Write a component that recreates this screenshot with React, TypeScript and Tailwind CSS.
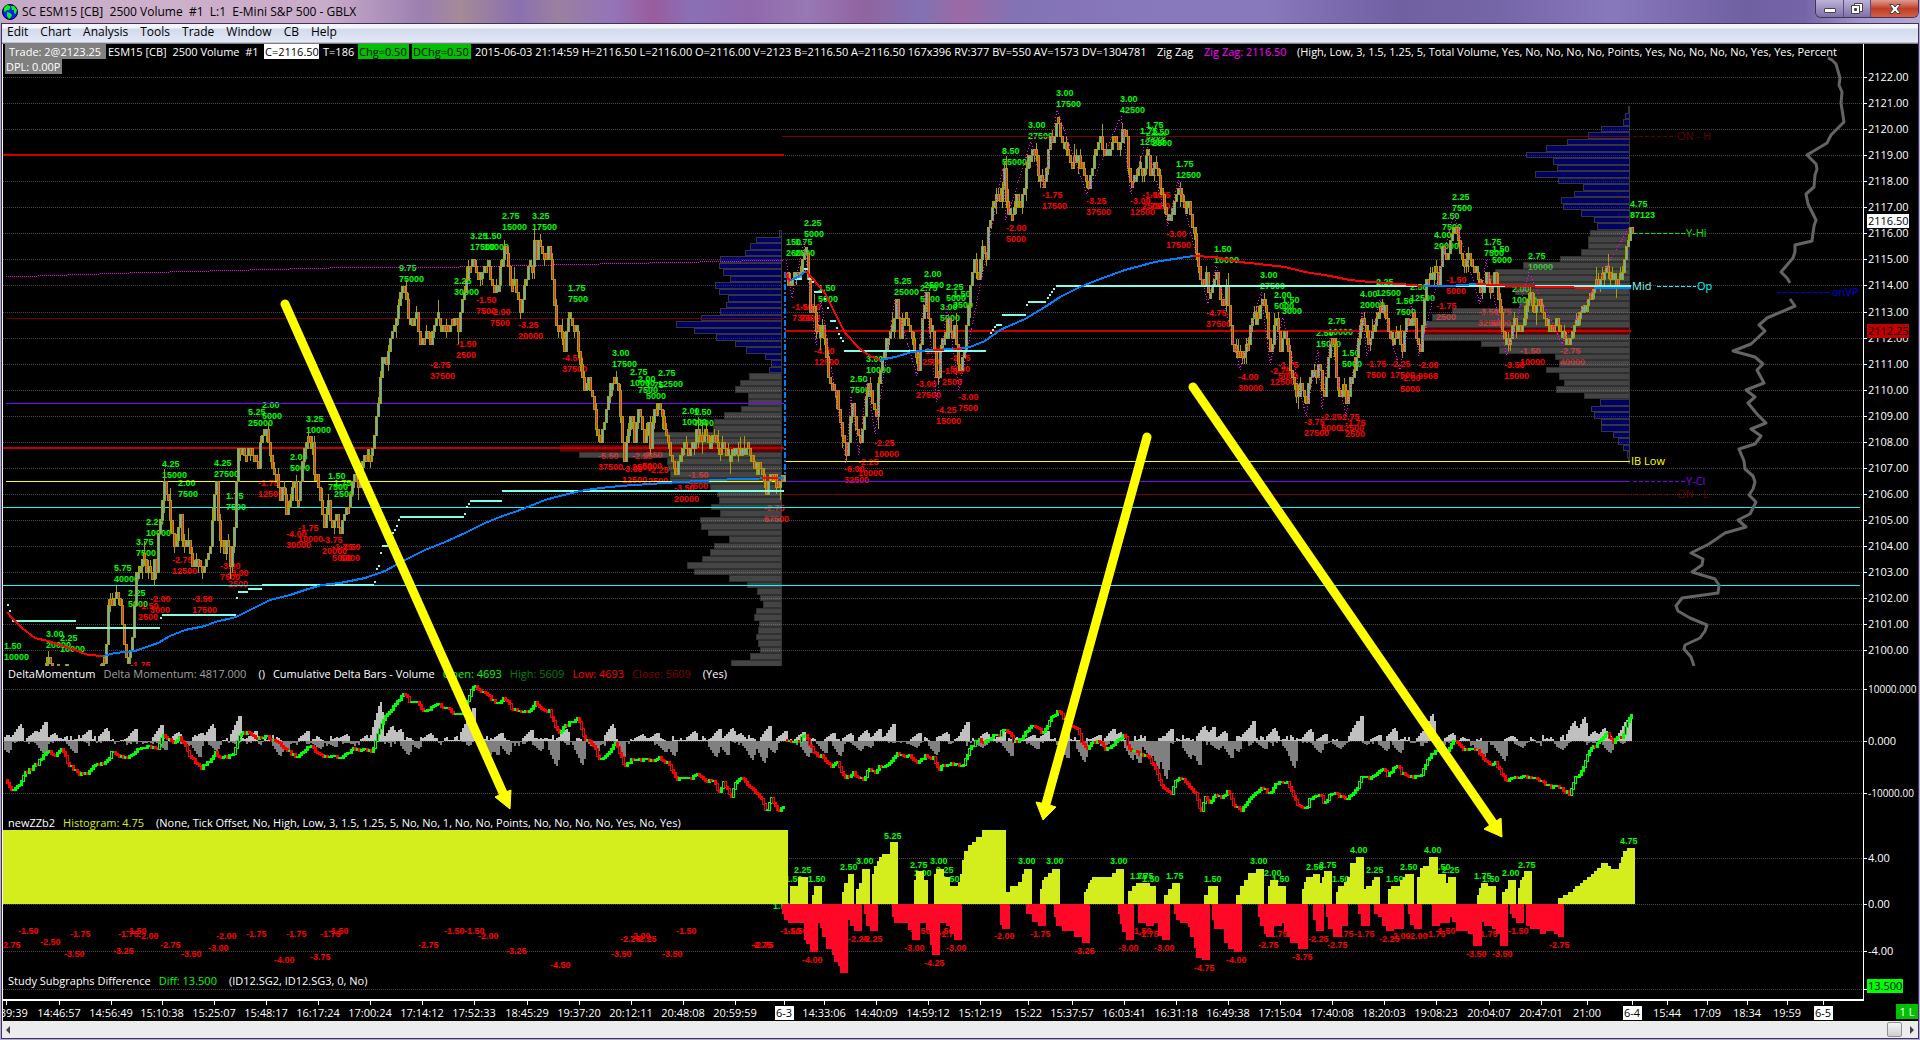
import React from "react";

type Pt = [number, number];

const parse = (s: string): Pt[] =>
  s
    .trim()
    .split(/\s+/)
    .map((p) => p.split(",").map(Number) as Pt);

const noise = (n: number) => {
  const v = Math.sin(n * 127.1 + 311.7) * 43758.5453;
  return v - Math.floor(v);
};

const TICK = 6.515;
const priceY = (p: number) => 77 + (2122 - p) * 4 * TICK;

/* ---------- price bars ---------- */

const SESSION_1 = parse(`
3,690 40,690 44,668 47,655 50,672 56,672 60,666 64,670 75,690 96,690 99,668 104,660 107,605 111,605 115,593 119,605 124,655 126,664
131,640 135,575 138,567 142,553 145,572 148,560 150,585 153,562 155,572 157,533 160,513 163,482 167,502 169,520 173,546 176,535 179,515 182,547 186,533
189,552 192,575 195,556 200,572 205,558 209,547 212,502 215,482 218,540 223,553 226,535 229,567 233,527 236,455 238,443 243,455 248,448
257,468 259,443 262,430 266,432 268,448 272,475 276,478 279,502 282,484 285,513 288,502 293,482 296,513 299,482 302,448 307,443 311,445
312,475 316,478 319,502 323,527 327,502 330,527 335,515 339,533 343,513 348,502 352,475 357,488 362,457 367,458 372,448 373,433 377,400
378,383 381,358 386,362 388,338 392,330 395,318 399,293 403,290 405,300 407,318 412,325 415,313 418,343 425,332 429,343 432,327 437,317 442,330 446,335
450,325 455,317 457,330 460,307 463,290 467,267 471,260 474,266 477,280 482,267 487,268 492,293 497,285 499,267 502,252 504,247 507,265
508,285 513,282 517,297 519,312 522,290 527,267 531,265 533,240 535,258 537,240 542,257 544,265 547,247 550,267 552,297 556,330 560,332
563,350 567,317 572,327 575,330 578,360 583,387 587,378 592,400 594,423 599,440 603,423 606,400 609,380 613,382 616,380 618,400 621,440
623,460 627,427 630,410 633,443 636,410 639,413 643,443 647,423 649,446 652,413 657,403 660,410 663,427 668,443 670,462 675,473 678,460
683,443 687,455 692,446 695,430 698,438 703,436 708,442 713,436 717,448 723,449 728,460 733,448 738,455 743,448 747,450 750,462 753,467
758,467 762,480 765,492 768,480 772,470 776,492 780,477 783,481`);

const SESSION_2 = parse(`
785,273 788,292 793,270 798,278 803,250 805,254 807,277 809,311 813,313 815,330 821,327 824,347 827,377 832,395 834,383 838,420 842,437
846,460 848,420 851,403 854,427 859,442 863,413 867,380 872,408 876,422 877,380 881,357 885,340 892,330 895,300 899,337 903,317 908,327
913,350 917,370 921,320 925,295 928,328 932,330 934,377 937,376 940,338 945,340 947,320 951,336 953,327 956,357 959,370 963,350 965,327
968,290 973,262 977,278 981,244 985,260 987,228 991,208 995,195 1000,200 1003,170 1006,213 1010,217 1015,196 1019,206 1023,185 1027,157
1031,150 1035,153 1037,175 1043,180 1046,163 1048,136 1052,142 1056,118 1059,137 1063,145 1067,157 1072,162 1076,150 1079,165 1087,186
1091,165 1095,150 1099,138 1104,162 1108,147 1113,142 1118,148 1121,131 1125,136 1127,165 1130,187 1133,175 1139,168 1142,175 1146,150
1149,175 1153,162 1157,177 1161,195 1164,213 1168,218 1172,213 1174,195 1178,195 1180,200 1183,207 1187,203 1190,220 1193,233 1196,260
1198,272 1202,290 1205,273 1208,300 1212,277 1216,275 1218,298 1222,310 1225,288 1228,318 1232,355 1236,345 1240,363 1244,345 1247,346
1249,327 1252,318 1257,318 1261,298 1265,313 1267,338 1270,357 1273,327 1276,318 1279,350 1282,327 1286,340 1289,368 1293,383 1296,403
1298,383 1302,390 1306,406 1307,383 1312,366 1315,377 1318,360 1322,403 1326,367 1330,340 1333,347 1336,390 1340,398 1342,383 1346,407
1348,380 1353,370 1356,347 1358,330 1362,318 1367,343 1372,325 1377,310 1383,307 1387,330 1392,343 1397,332 1400,355 1405,318 1410,328
1412,310 1416,345 1419,350 1422,307 1425,280 1430,280 1434,267 1437,283 1441,247 1446,263 1448,240 1452,227 1456,229 1458,247 1463,265
1467,253 1472,272 1476,270 1480,300 1485,272 1489,293 1493,275 1498,305 1502,337 1507,343 1513,320 1520,330 1523,318 1528,290 1533,310
1538,301 1543,321 1550,325 1555,319 1558,330 1567,343 1572,327 1580,313 1588,297 1595,285 1600,281 1605,264 1609,276 1620,276 1624,254
1626,240 1629,230 1632,222`);

const sample = (pts: Pt[], step: number): Pt[] => {
  const out: Pt[] = [];
  let i = 0;
  for (let x = pts[0][0]; x <= pts[pts.length - 1][0]; x += step) {
    while (i < pts.length - 2 && pts[i + 1][0] < x) i++;
    const [x0, y0] = pts[i];
    const [x1, y1] = pts[i + 1];
    out.push([x, y0 + ((y1 - y0) * (x - x0)) / (x1 - x0)]);
  }
  return out;
};

const Bars = ({ points, seed }: { points: Pt[]; seed: number }) => {
  const base = priceY(2122);
  const snap = (y: number) => Math.round(base + Math.round((y - base) / TICK) * TICK);
  const closes = sample(points, 2);
  let olive = "";
  let up = "";
  let down = "";
  closes.forEach(([x, y], i) => {
    if (i === 0) return;
    const open = snap(closes[i - 1][1]);
    const close = snap(y);
    let top = Math.min(open, close);
    let bottom = Math.max(open, close);
    const rising = close < open || (close === open && noise(i + seed) > 0.5);
    if (bottom - top < 6) {
      if (noise(i * 3 + seed) > 0.5) bottom += 6;
      else top -= 6;
    }
    const high = top - Math.floor(noise(i * 5 + seed) * noise(i * 9 + seed) * 3) * 6;
    const low = bottom + Math.floor(noise(i * 7 + seed) * noise(i * 11 + seed) * 3) * 6;
    const h = bottom - top + 1;
    olive += `M${x} ${top}h3v${h}h-3z`;
    olive += `M${x + 1} ${high}h1v${low - high + 1}h-1z`;
    const body = `M${x + 1} ${top + 1}h1v${Math.max(1, h - 2)}h-1z`;
    if (rising) up += body;
    else down += body;
  });
  return (
    <g shapeRendering="crispEdges">
      <path d={olive} fill="#a8a000" />
      <path d={up} fill="#4fb4ff" />
      <path d={down} fill="#e8304a" />
    </g>
  );
};

/* ---------- swing labels: x, y, points, volume ---------- */

const SWINGS = `
4,646,1.50,10000 46,634,3.00,20000 60,638,2.25,10000 130,665,-1.75, 114,568,5.75,40000 128,593,2.25,5000 138,606,-1.50,2500 150,599,-2.00,3000
136,542,3.75,7500 146,522,2.25,10000 162,464,4.25,15000 178,483,2.00,7500 172,560,-2.75,12500 192,599,-3.50,17500 214,463,4.25,27500
226,496,1.75,7500 220,566,-3.00,7500 228,573,-3.00,2500 248,412,5.25,25000 262,405,2.00,5000 258,483,-1.75,12500 290,457,2.00,5000
306,419,3.25,10000 286,534,-4.00,30000 298,528,-1.75,10000 328,476,1.50,7500 334,483,1.75,2500 322,540,-3.75,20000 332,547,-1.75,5000
340,547,-1.50,5000 399,268,9.75,75000 454,281,2.25,30000 470,236,3.25,17500 484,236,1.50,10000 502,216,2.75,15000 532,216,3.25,17500
476,300,-1.50,7500 490,312,-2.00,7500 518,325,-3.25,20000 456,344,-1.50,2500 430,365,-2.75,37500 568,288,1.75,7500 562,358,-4.50,37500
612,353,3.00,17500 630,372,2.75,10000 638,379,2.00,7500 646,385,1.75,5000 658,373,2.75,12500 598,456,-5.50,37500 632,456,-2.25,2500
642,455,-2.50,5000 622,469,-3.00,12500 648,470,-2.25,2500 674,488,-3.50,20000 688,475,-1.50,7500 682,411,2.00,10000 694,412,1.50,7500
764,508,-2.75,87500 786,242,150,2600 795,242,1.75,2500 804,223,2.25,5000 792,307,-1.50,7300 800,307,-1.50,7500 818,288,1.50,5000
814,351,-4.00,12500 866,359,3.00,10000 850,379,2.50,7500 844,469,-6.00,32500 858,462,-2.25,10000 874,443,-2.25,10000 894,281,5.25,25000
920,288,2.75,5000 924,274,2.00,2500 922,351,-1.50,2500 916,384,-3.00,27500 936,410,-4.25,15000 940,307,3.00,5000 946,287,2.25,5000
953,294,1.50,3500 942,371,-1.50,2500 950,358,-1.75,5000 958,397,-3.00,7500 1006,228,-2.00,5000 1002,151,8.50,55000 1028,125,3.00,27500
1056,93,3.00,17500 1042,195,-1.75,17500 1086,201,-3.25,37500 1120,99,3.00,42500 1140,131,1.75,12500 1146,125,1.75,5000 1152,132,1.50,2500
1130,201,-3.00,12500 1142,195,-1.50,2500 1150,195,-1.75,7500 1176,164,1.75,12500 1166,234,-3.00,17500 1214,249,1.50,10000
1206,313,-4.75,37500 1238,377,-4.00,30000 1260,275,3.00,27500 1274,295,2.00,5000 1282,300,1.50,3000 1270,371,-2.75,12500 1278,365,-1.75,5000
1328,321,2.75,10000 1316,333,2.50,15000 1342,353,1.50,5000 1304,422,-3.75,27500 1321,417,-2.25,5000 1339,417,-2.75,12500 1345,423,-1.75,2500
1360,294,4.00,20000 1376,282,2.25,12500 1396,301,1.50,7500 1410,287,2.50,12500 1366,364,-1.75,7500 1390,364,-2.25,17500 1400,378,-2.00,5000
1418,365,-2.00,9968 1436,306,-1.75,2500 1434,235,4.00,20000 1442,216,2.50,7500 1452,197,2.25,7500 1446,280,-1.50,5000 1484,242,1.75,7500
1492,249,1.50,5000 1478,312,-3.50,32500 1491,312,-1.75,5000 1528,256,2.75,10000 1512,289,2.00,10000 1504,365,-3.50,15000
1520,351,-1.50,10000 1560,351,-2.75,40000 1630,181,4.75,87123`
  .trim()
  .split(/\s+/)
  .map((s) => s.split(","))
  .map(([x, y, v, vol]) => (vol === "87123" ? [x, "204", v, vol] : [x, y, v, vol]));

const Swings = () => (
  <g className="font-['Liberation_Sans',sans-serif] text-[9px] font-bold">
    {SWINGS.map(([x, y, v, vol], i) => (
      <text key={i} x={x} y={Number(y) + 3} fill={v.startsWith("-") ? "#f00" : "#0f0"}>
        {v}
        {vol && (
          <tspan x={x} dy="11">
            {vol}
          </tspan>
        )}
      </text>
    ))}
  </g>
);

/* ---------- volume profiles ---------- */

const PROFILE_1 = [
  779, 756, 750, 745, 720, 719, 723, 730, 715, 719, 728, 726, 720, 701, 676, 694, 716, 735, 746, 765, 771, 769, 749, 740, 735, 748, 748, 741,
  724, 714, 713, 652, 652, 560, 579, 667, 668, 670, 670, 710, 717, 719, 711, 720, 700, 701, 708, 729, 714, 710, 702, 687, 694, 729, 747, 757,
  760, 763, 756, 754, 759, 758, 756, 758, 760, 750, 731,
];
const PROFILE_2 = [
  1628, 1625, 1623, 1601, 1588, 1567, 1546, 1526, 1553, 1557, 1535, 1558, 1583, 1574, 1561, 1563, 1581, 1594, 1597, 1590, 1588, 1588, 1581,
  1560, 1523, 1495, 1485, 1487, 1515, 1533, 1519, 1452, 1432, 1423, 1423, 1422, 1481, 1499, 1555, 1559, 1546, 1559, 1564, 1556, 1584, 1600,
  1591, 1594, 1601, 1601, 1613, 1618, 1623, 1627, 1628,
];

const Profile = ({
  rows,
  right,
  top,
  gray,
  poc,
}: {
  rows: number[];
  right: number;
  top: number;
  gray: [number, number];
  poc: number;
}) => (
  <g shapeRendering="crispEdges" opacity="0.5">
    {rows.map((left, i) => {
      const y = Math.round(top + i * TICK);
      const h = Math.round(top + (i + 1) * TICK) - y;
      const inGray = i >= gray[0] && i < gray[1];
      const edge = i === poc ? "#b00000" : inGray ? "#606060" : "#6a6a74";
      const fill = i === poc ? "#c00000" : inGray ? "#888888" : "#0000c8";
      return (
        <g key={i}>
          <rect x={left} y={y} width={right - left} height={h} fill={edge} />
          <rect x={left + 1} y={y + 1} width={Math.max(0, right - left - 2)} height={h - 2} fill={fill} />
        </g>
      );
    })}
    <rect x={right - 1} y={top} width="1" height={rows.length * TICK} fill="#6a6a74" />
  </g>
);

/* ---------- overlays on the price pane ---------- */

const ZIGZAG =
  "786,260 792,298 804,241 816,345 821,300 846,463 851,396 859,455 867,378 875,434 895,299 917,376 925,292 937,402 947,305 959,390 985,262 1003,168 1006,220 1031,142 1043,188 1057,110 1087,194 1121,116 1131,194 1146,140 1168,226 1178,180 1208,304 1216,266 1240,370 1261,292 1270,363 1283,318 1306,416 1318,350 1322,409 1330,338 1346,416 1362,312 1367,356 1380,300 1400,370 1412,306 1419,356 1454,214 1480,304 1486,260 1507,357 1529,272 1562,344 1631,224";

const AVERAGE: [string, string][] = [
  ["#f00", "7,612 12,618 22,628 35,638 48,641 60,645 75,650 88,655 103,656"],
  [
    "#0080ff",
    "103,656 115,653 135,651 158,643 170,636 185,630 205,626 215,622 236,617 250,610 270,600 290,595 305,590 322,585 340,583 365,578 385,571 405,560 425,550 445,542 465,533 485,523 500,517 520,510 545,500 560,496 580,491 600,488 620,486 650,484 680,482 700,481 736,479 784,478",
  ],
  ["#f00", "762,478 778,478"],
  ["#f00", "786,273 788,279 791,280"],
  ["#0080ff", "791,280 798,277 806,271"],
  ["#f00", "806,271 825,293 845,333 860,349 870,356 880,360"],
  [
    "#0080ff",
    "880,360 895,357 912,352 930,350 955,349 970,347 985,341 1000,330 1025,319 1045,307 1060,297 1080,287 1100,279 1125,270 1155,262 1180,258 1193,256",
  ],
  ["#f00", "933,350 944,350"],
  ["#f00", "953,349 962,349"],
  ["#f00", "1193,256 1215,257 1240,262 1285,267 1305,272 1330,276 1350,280 1370,282 1400,284 1423,286"],
  ["#0080ff", "1423,286 1450,286 1476,284"],
  ["#f00", "1476,284 1515,286 1594,288"],
  ["#0080ff", "1594,288 1631,288"],
];

const STEPS = `12,76,621 76,160,628 162,236,615 238,248,592 248,262,589 262,374,585 382,388,546 400,464,517 470,502,501 502,784,491
7,9,605 9,11,611 11,13,618 160,162,618 236,238,598 374,376,582 376,378,569 378,380,566 380,382,553 392,394,533 394,396,530 396,398,526
398,400,520 464,466,514 466,468,507 468,470,504 795,802,279 804,808,269 808,811,279 812,814,282 814,822,292 824,826,299 827,829,308
830,836,321 836,838,328 838,840,334 840,842,338 842,844,341 844,986,351 988,990,338 990,992,333 992,994,330 994,996,327 996,1002,325
1002,1026,315 1026,1028,305 1028,1046,302 1047,1049,298 1049,1051,295 1051,1053,292 1053,1055,289 1056,1631,286`
  .trim()
  .split(/\s+/)
  .map((s) => s.split(",").map(Number));

const DENSITY = [
  "1828,58 1832,60 1836,64 1840,78 1839,85 1842,92 1841,103 1844,122 1831,135 1827,143 1807,155 1816,164 1817,169 1815,175 1814,187 1806,194 1808,204 1816,220 1814,226 1812,241 1795,245 1795,252 1793,258 1781,272 1787,278 1790,283",
  "1790,299 1795,306 1767,318 1759,325 1765,331 1751,344 1733,351 1755,357 1763,364 1757,370 1764,383 1746,390 1755,397 1748,403 1757,414 1766,423 1751,429 1761,436 1755,444 1739,449 1744,461 1745,469 1753,476 1755,482 1753,489 1749,495 1756,502 1750,514 1738,520 1746,527 1725,533 1709,544 1691,553 1703,559 1702,565 1692,572 1715,579 1719,585 1718,593 1682,598 1676,606 1678,611 1690,618 1707,625 1705,631 1700,638 1685,645 1684,649 1691,657 1694,666",
];

const Level = ({
  x1 = 3,
  x2,
  y,
  color,
  width = 1,
  dash,
}: {
  x1?: number;
  x2: number | string;
  y: number;
  color: string;
  width?: number;
  dash?: string;
}) => <line x1={x1} x2={x2} y1={y} y2={y} stroke={color} strokeWidth={width} strokeDasharray={dash} shapeRendering="crispEdges" />;

const LevelTag = ({ x, y, color, dashFrom, children }: { x: number; y: number; color: string; dashFrom?: number; children: string }) => (
  <>
    {dashFrom && <Level x1={dashFrom} x2={x - 1} y={y + 0.5} color={color} dash="4 2" />}
    <text x={x} y={y + 4} fill={color} className="text-[11px]">
      {children}
    </text>
  </>
);

const PricePane = () => (
  <>
    <clipPath id="price-clip">
      <rect x="0" y="44" width="100%" height="622" />
    </clipPath>
    <g clipPath="url(#price-clip)">
      <Swings />
      <Profile rows={PROFILE_1} right={782} top={230} gray={[22, 99]} poc={33} />
      <Profile rows={PROFILE_2} right={1630} top={106} gray={[19, 45]} poc={34} />
      <line x1="3" x2="100%" y1="507.5" y2="507.5" stroke="#0ff" shapeRendering="crispEdges" />
      <line x1="3" x2="100%" y1="585.5" y2="585.5" stroke="#0ff" shapeRendering="crispEdges" />
      <polyline points="6,277 130,273 330,268 460,267 600,264 700,262 784,260" fill="none" stroke="#f0f" strokeDasharray="1 1" shapeRendering="crispEdges" />
      <Level x1={6} x2={784} y={318.5} color="#780000" />
      <Level x1={6} x2={784} y={403.5} color="#8000ff" />
      <Level x2={784} y={155} color="#d00000" width={2} />
      <Level x2={784} y={448} color="#c00000" width={2} />
      <Level x1={6} x2={784} y={481.5} color="#ff0" />
      <Level x1={782} x2={1630} y={136.5} color="#780000" />
      <Level x1={785} x2={1631} y={331} color="#c80000" width={2} />
      <Level x1={785} x2={1630} y={461.5} color="#ff0" />
      <Level x1={784} x2={1630} y={481.5} color="#8000ff" />
      <Level x1={784} x2={1630} y={494.5} color="#780000" />
      <Bars points={SESSION_1} seed={3} />
      <Bars points={SESSION_2} seed={8} />
      <polyline points={ZIGZAG} fill="none" stroke="#f0f" strokeDasharray="1 2" shapeRendering="crispEdges" />
      <line x1="785" x2="785" y1="272" y2="476" stroke="#0080ff" strokeWidth="2" strokeDasharray="6 2 2 2" shapeRendering="crispEdges" />
      <g shapeRendering="crispEdges" fill="#7fffe8">
        {STEPS.map(([a, b, y]) => (
          <rect key={`${a}-${b}`} x={a} y={y - 1} width={b - a} height="2" />
        ))}
      </g>
      {AVERAGE.map(([color, points], i) => (
        <polyline key={i} points={points} fill="none" stroke={color} strokeWidth="2" shapeRendering="crispEdges" />
      ))}
      {DENSITY.map((points) => (
        <polyline key={points} points={points} fill="none" stroke="#646464" strokeWidth="3" strokeLinejoin="round" />
      ))}
      <LevelTag x={1677} y={136} color="#640000" dashFrom={1633}>ON - H</LevelTag>
      <LevelTag x={1686} y={233} color="#00f000" dashFrom={1633}>Y-Hi</LevelTag>
      <LevelTag x={1632} y={286} color="#7fffe8">Mid</LevelTag>
      <LevelTag x={1697} y={286} color="#00ffff" dashFrom={1657}>Op</LevelTag>
      <LevelTag x={1832} y={292} color="#0000e0" dashFrom={1777}>onVP</LevelTag>
      <LevelTag x={1631} y={461} color="#ffff00">IB Low</LevelTag>
      <LevelTag x={1686} y={481} color="#8000ff" dashFrom={1633}>Y-Cl</LevelTag>
      <LevelTag x={1677} y={494} color="#640000" dashFrom={1633}>ON - L</LevelTag>
    </g>
  </>
);

/* ---------- cumulative delta pane ---------- */

const DELTA_1 = parse(`
4,778 10,789 18,783 23,773 36,763 46,750 54,755 61,748 66,762 77,773 86,773 92,765 105,762 110,752 125,757 135,750 140,746 156,747
162,733 171,742 179,737 189,755 199,767 209,760 214,752 220,758 232,753 239,732 247,732 255,737 265,735 278,743 286,750 295,757 309,745
319,755 339,757 352,748 371,750 378,727 385,713 395,702 403,691 409,702 416,700 423,712 436,703 446,708 457,715 462,710 467,697 473,684
477,689 484,692 496,703 503,696 510,708 521,712 528,710 534,702 541,708 548,710 557,732 567,723 577,717 583,738 591,743 598,758 607,753
614,742 623,765 633,757 648,760 659,757 667,763 676,778 689,778 695,772 703,780 713,780 717,792 722,782 730,795 733,782 741,775 749,787
760,797 765,812 770,798 776,810 783,806`);
const DELTA_2 = parse(`
784,738 797,741 803,733 810,747 815,755 820,755 830,767 835,760 842,775 848,777 851,771 856,777 863,778 867,768 875,773 879,763 883,768
895,753 908,755 917,762 924,755 932,757 938,768 946,763 962,764 968,748 977,738 982,742 992,735 997,735 1003,728 1010,735 1013,742
1020,738 1027,727 1033,724 1040,731 1045,728 1049,718 1057,710 1063,718 1068,725 1076,728 1080,740 1085,748 1092,742 1099,740 1104,750
1110,745 1115,740 1123,734 1128,748 1137,753 1146,755 1153,765 1160,783 1167,792 1171,792 1173,780 1180,777 1187,783 1194,793 1199,812
1204,797 1209,803 1213,792 1220,798 1226,790 1232,803 1240,810 1248,798 1253,792 1262,787 1268,793 1275,782 1286,782 1296,805 1306,807
1308,798 1318,793 1323,802 1330,792 1346,798 1355,788 1361,775 1367,778 1382,768 1386,775 1396,764 1401,773 1419,777 1425,760 1435,748
1445,750 1453,740 1460,747 1477,750 1481,757 1488,763 1494,762 1500,772 1505,779 1513,775 1534,777 1547,785 1559,787 1568,793 1574,777
1581,770 1587,750 1597,742 1606,732 1612,742 1615,735 1620,738 1625,722 1631,713`);

const DeltaLine = ({ points, seed }: { points: Pt[]; seed: number }) => {
  const closes = sample(points, 2).map(([x, y], i) => [x, Math.round(y + (noise(i + seed) - 0.5) * 3)] as Pt);
  return (
    <g shapeRendering="crispEdges">
      {closes.slice(1).map(([x, y], i) => {
        const prev = closes[i][1];
        const top = Math.min(prev, y);
        const h = Math.abs(y - prev) + 2;
        return (
          <g key={x}>
            <rect x={x} y={top} width="3" height={h} fill={y <= prev ? "#00ff00" : "#ff0000"} />
            {h > 6 && <rect x={x + 1} y={top + 1} width="1" height={h - 2} fill="#000" />}
          </g>
        );
      })}
    </g>
  );
};

const SPIKES = parse(`
20,17 35,10 45,19 54,8 89,11 106,13 135,12 161,16 178,9 201,8 212,17 239,25 255,10 307,10 346,7 380,39 392,15 400,12 430,8 468,24 473,33
501,8 531,11 566,12 612,17 642,7 657,8 694,10 719,12 732,13 740,8 769,15 8,-12 45,-15 75,-12 165,-9 199,-16 216,-10 280,-15 287,-10
320,-8 335,-6 408,-14 418,-8 490,-14 497,-14 508,-14 540,-10 556,-25 582,-24 597,-10 623,-16 665,-11 674,-15 716,-16 727,-14 752,-19 764,-22
774,-12 785,10 803,9 833,8 850,8 866,11 879,12 893,17 919,8 946,9 967,19 986,9 1003,9 1033,6 1047,10 1099,6 1113,12 1120,9 1171,12
1204,15 1213,14 1224,10 1248,12 1253,20 1274,13 808,-16 825,-12 840,-15 860,-10 870,-7 916,-7 936,-14 982,-7 1011,-15 1037,-8 1067,-17
1084,-21 1132,-19 1139,-22 1150,-16 1158,-28 1166,-38 1190,-18 1199,-24 1218,-9 1231,-17 1238,-11 1265,-8 1310,12 1325,7 1357,20
1361,25 1379,6 1394,13 1432,27 1425,12 1452,8 1512,5 1574,20 1584,24 1594,10 1604,13 1626,21 1631,27 1294,-27 1290,-13 1320,-12
1340,-8 1386,-10 1400,-12 1480,-12 1484,-16 1501,-15 1504,-20 1522,-7 1562,-9 1610,-12`);

const MomentumBars = () => {
  let up = "";
  let down = "";
  for (let x = 4; x < 1632; x += 2) {
    const n = noise(Math.floor(x / 6) * 6);
    let a = n > 0.5 ? 1 + noise(x) * noise(x + 1) * 6 : 0;
    let b = n > 0.5 ? 0 : 1 + noise(x + 5) * noise(x + 6) * 6;
    SPIKES.forEach(([sx, sh]) => {
      const d = Math.abs(sx - x);
      const lead = x < sx ? 10 : 3;
      if (d >= lead) return;
      const v = Math.abs(sh) * (1 - Math.max(0, d - 1) / (lead + 1));
      if (sh > 0) a = Math.max(a, v);
      else b = Math.max(b, v);
    });
    if (a >= 1) up += `M${x} 741h2v${-Math.round(a)}h-2z`;
    if (b >= 1) down += `M${x} 741h2v${Math.round(b)}h-2z`;
  }
  return (
    <g shapeRendering="crispEdges">
      <path d={up} fill="#c0c0c0" />
      <path d={down} fill="#808080" />
    </g>
  );
};

/* ---------- zig zag histogram pane: start x, end x, edge y ---------- */

const triples = (s: string) =>
  s
    .trim()
    .split(/\s+/)
    .map((t) => t.split(",").map(Number));

const RISING = triples(`
3,788,830 790,798,886 798,808,877 812,814,895 814,822,886 842,844,892 844,848,883 848,854,874 856,859,889 859,862,883 862,870,869
872,874,874 874,877,866 877,879,861 879,882,857 882,890,854 890,898,842 914,916,880 916,924,871 924,928,880 934,936,874 936,944,869
944,950,877 950,958,886 958,960,882 960,962,874 962,964,860 964,968,851 968,972,845 972,976,842 976,982,837 982,1006,830 1006,1010,892
1010,1018,886 1018,1022,882 1022,1024,874 1024,1032,869 1040,1042,889 1042,1044,880 1044,1048,877 1048,1052,873 1052,1060,869
1084,1086,892 1086,1088,889 1088,1090,883 1090,1092,880 1092,1112,877 1112,1116,873 1116,1124,869 1128,1132,891 1132,1136,886
1136,1150,883 1150,1156,886 1164,1168,895 1168,1172,889 1172,1180,883 1204,1208,895 1208,1218,886 1236,1240,895 1240,1244,886
1244,1248,880 1248,1256,873 1256,1264,869 1268,1270,886 1270,1278,880 1278,1286,886 1302,1304,889 1304,1306,882 1306,1313,877
1313,1320,874 1320,1322,883 1322,1324,877 1324,1332,871 1336,1338,892 1338,1344,886 1344,1347,882 1347,1350,877 1350,1353,863
1353,1356,863 1356,1364,857 1364,1366,889 1366,1372,886 1372,1374,880 1374,1380,877 1388,1391,889 1391,1400,886 1400,1403,880
1403,1405,877 1405,1414,874 1417,1420,877 1420,1423,868 1423,1429,866 1429,1438,857 1438,1446,874 1446,1448,883 1448,1456,877
1477,1479,895 1479,1481,888 1481,1488,883 1488,1496,886 1502,1505,892 1505,1508,889 1508,1516,880 1518,1520,888 1520,1522,880
1522,1524,877 1524,1532,871 1558,1563,898 1563,1568,895 1568,1573,892 1573,1575,889 1575,1580,886 1580,1583,883 1583,1587,880
1587,1591,877 1591,1594,874 1594,1597,871 1597,1601,868 1601,1608,863 1608,1611,866 1611,1619,869 1619,1621,863 1621,1623,857
1623,1627,851 1627,1635,848`);

const FALLING = triples(`
782,784,914 784,788,920 788,804,923 804,806,940 806,810,944 810,818,952 818,820,923 820,822,928 822,826,937 826,832,949 832,834,955
834,838,962 838,840,966 840,848,973 848,850,920 850,854,926 854,862,931 864,866,914 866,870,926 870,878,931 892,894,917 894,908,923
908,912,930 912,920,940 920,926,923 926,930,930 930,932,945 932,940,955 940,946,923 946,950,926 950,954,934 954,962,940 1000,1002,925
1002,1010,929 1026,1032,914 1032,1038,922 1038,1046,926 1054,1056,917 1056,1062,926 1062,1074,931 1074,1082,937 1082,1090,943
1118,1120,914 1120,1122,924 1122,1126,932 1126,1134,940 1138,1146,923 1146,1154,926 1154,1158,923 1158,1162,936 1162,1170,940
1174,1176,914 1176,1180,920 1180,1188,923 1188,1190,927 1190,1194,937 1194,1196,948 1196,1202,958 1202,1210,960 1212,1214,920
1214,1224,929 1224,1228,943 1228,1234,949 1234,1242,952 1258,1260,917 1260,1264,926 1264,1266,934 1266,1274,937 1274,1282,926
1282,1284,923 1284,1287,931 1287,1290,937 1290,1298,943 1298,1308,949 1313,1316,920 1316,1324,931 1326,1328,917 1328,1333,929
1333,1342,937 1342,1348,926 1358,1361,914 1361,1370,926 1374,1378,914 1378,1382,917 1382,1386,926 1386,1394,931 1394,1404,929
1408,1410,914 1410,1414,925 1414,1422,929 1432,1440,926 1440,1450,923 1450,1452,917 1452,1456,922 1456,1468,931 1468,1473,934
1473,1482,946 1482,1484,922 1484,1492,926 1492,1496,929 1496,1500,934 1500,1508,946 1510,1512,914 1512,1516,918 1516,1524,923
1526,1530,926 1530,1540,929 1540,1546,934 1546,1554,931 1554,1558,934 1558,1564,937`);

const HISTO_LABELS = `
773,906,1.50 785,879,1.50 794,870,2.25 808,879,1.50 840,867,2.50 856,861,3.00 884,836,5.25 910,865,2.75 914,873,2.00 930,861,3.00 936,870,2.25 942,879,1.50
1018,861,3.00 1046,861,3.00 1110,861,3.00 1130,876,1.75 1136,876,1.75 1142,879,1.50 1166,876,1.75 1204,879,1.50 1250,861,3.00
1264,873,2.00 1272,879,1.50 1306,867,2.50 1319,865,2.75 1332,879,1.50 1350,850,4.00 1366,870,2.25 1386,879,1.50 1400,867,2.50
1424,850,4.00 1433,867,2.50 1442,870,2.25 1474,876,1.75 1482,879,1.50 1502,873,2.00 1518,865,2.75 1620,841,4.75
18,931,-1.50 0,945,-2.75 40,942,-2.50 70,934,-1.75 64,954,-3.50 118,934,-1.75 126,931,-1.50 138,936,-2.00 113,951,-3.25 160,945,-2.75
181,954,-3.50 216,936,-2.00 208,948,-3.00 246,934,-1.75 274,960,-4.00 286,934,-1.75 310,957,-3.75 320,934,-1.75 328,931,-1.50
418,945,-2.75 444,931,-1.50 464,931,-1.50 478,936,-2.00 506,951,-3.25 550,965,-4.50 620,939,-2.25 630,936,-2.00 636,939,-2.25
611,954,-3.50 662,954,-3.50 676,931,-1.50 751,945,-2.75 753,945,-2.75 780,931,-1.50 787,931,-1.50 802,960,-4.00 848,939,-2.25
862,939,-2.25 904,948,-3.00 910,931,-1.50 924,963,-4.25 933,931,-1.50 938,934,-1.75 946,948,-3.00 994,936,-2.00 1030,934,-1.75
1074,951,-3.25 1118,948,-3.00 1131,931,-1.50 1138,934,-1.75 1154,948,-3.00 1194,968,-4.75 1226,960,-4.00 1258,945,-2.75
1267,934,-1.75 1292,957,-3.75 1308,939,-2.25 1327,945,-2.75 1333,934,-1.75 1354,934,-1.75 1379,939,-2.25 1390,936,-2.00
1407,936,-2.00 1425,934,-1.75 1435,931,-1.50 1466,954,-3.50 1477,934,-1.75 1492,954,-3.50 1508,931,-1.50 1549,945,-2.75`
  .trim()
  .split(/\s+/)
  .map((s) => s.split(","));

const Histogram = () => (
  <>
    <g className="font-['Liberation_Sans',sans-serif] text-[9px] font-bold">
      {HISTO_LABELS.map(([x, y, v], i) => (
        <text key={i} x={x} y={Number(y) + 3} fill={v.startsWith("-") ? "#f00" : "#0f0"}>
          {v}
        </text>
      ))}
    </g>
    <path shapeRendering="crispEdges" fill="#d4ed1c" d={RISING.map(([a, b, y]) => `M${a} 904V${y}H${b}V904z`).join("")} />
    <path shapeRendering="crispEdges" fill="#ff0828" d={FALLING.map(([a, b, y]) => `M${a} 904V${y}H${b}V904z`).join("")} />
  </>
);

/* ---------- chart frame ---------- */

const PRICES = Array.from({ length: 23 }, (_, i) => 2122 - i);
const STUDY_TICKS: [number, string][] = [
  [689, "10000.000"],
  [741, "0.000"],
  [793, "-10000.00"],
  [858, "4.00"],
  [904, "0.00"],
  [951, "-4.00"],
  [989, ""],
];
const TIMES: [number, string][] = [
  [6, "14:39:39"], [59, "14:46:57"], [111, "14:56:49"], [162, "15:10:38"], [214, "15:25:07"], [266, "15:48:17"], [318, "16:17:24"],
  [370, "17:00:24"], [422, "17:14:12"], [474, "17:52:33"], [527, "18:45:29"], [579, "19:37:20"], [631, "20:12:11"], [683, "20:48:08"],
  [735, "20:59:59"], [784, "6-3"], [824, "14:33:06"], [876, "14:40:09"], [928, "14:59:12"], [980, "15:12:19"], [1028, "15:22"],
  [1072, "15:37:57"], [1124, "16:03:41"], [1176, "16:31:18"], [1228, "16:49:38"], [1280, "17:15:04"], [1332, "17:40:08"],
  [1384, "18:20:03"], [1436, "19:08:23"], [1489, "20:04:07"], [1541, "20:47:01"], [1587, "21:00"], [1632, "6-4"], [1667, "15:44"],
  [1707, "17:09"], [1747, "18:34"], [1787, "19:59"], [1823, "6-5"],
];

const Arrow = ({ from, tip, left, right, neck }: { from: Pt; tip: Pt; left: Pt; right: Pt; neck: Pt }) => (
  <g fill="#ff0" stroke="#ff0">
    <line x1={from[0]} y1={from[1]} x2={neck[0]} y2={neck[1]} strokeWidth="9" strokeLinecap="round" />
    <path d={`M${tip}L${left}L${neck}L${right}Z`} strokeWidth="1" strokeLinejoin="round" />
  </g>
);

const Plot = () => (
  <svg className="absolute inset-0 h-full w-full" role="img" aria-label="Price, delta and zig zag chart">
    <g transform="translate(-3 -44)">
      <g shapeRendering="crispEdges" stroke="#484848" strokeDasharray="1 1">
        {PRICES.map((p) => (
          <line key={p} x1="3" x2="110%" y1={Math.round(priceY(p)) + 0.5} y2={Math.round(priceY(p)) + 0.5} />
        ))}
        {STUDY_TICKS.map(([y]) => (
          <line key={y} x1="3" x2="110%" y1={y + 0.5} y2={y + 0.5} />
        ))}
      </g>
      <PricePane />
      <MomentumBars />
      <DeltaLine points={DELTA_1} seed={2} />
      <DeltaLine points={DELTA_2} seed={6} />
      <Histogram />
    </g>
  </svg>
);

const Arrows = () => (
  <svg className="pointer-events-none absolute inset-0 h-full w-full" aria-hidden="true">
    <g transform="translate(-3 -44)">
      <Arrow from={[285, 304]} tip={[510, 809]} left={[495, 797]} right={[511, 790]} neck={[503, 793]} />
      <Arrow from={[1147, 437]} tip={[1043, 820]} left={[1036, 802]} right={[1056, 807]} neck={[1046, 804]} />
      <Arrow from={[1193, 387]} tip={[1502, 837]} left={[1484, 829]} right={[1501, 818]} neck={[1493, 823]} />
    </g>
  </svg>
);

const Marker = ({ y, width, bg, fg, children }: { y: number; width: number; bg: string; fg: string; children: string }) => (
  <>
    <rect x="3" y={y - 7} width={width} height="14" fill={bg} />
    <text x="4" y={y + 4} fill={fg}>
      {children}
    </text>
  </>
);

const Scale = () => (
  <svg className="h-full w-[55px] shrink-0 border-l border-white text-[11px]" role="img" aria-label="Value scale">
    <g transform="translate(0 -44)" fill="#fff">
      {PRICES.map((p) => (
        <g key={p}>
          <rect y={Math.round(priceY(p))} width="3" height="1" />
          <text x="4" y={Math.round(priceY(p)) + 4}>
            {p.toFixed(2)}
          </text>
        </g>
      ))}
      {STUDY_TICKS.map(([y, t]) => (
        <g key={y}>
          <rect y={y} width="3" height="1" />
          <text x="4" y={y + 4} className={t.length > 8 ? "text-[10px]" : "text-[11px]"}>
            {t}
          </text>
        </g>
      ))}
      <Marker y={221} width={42} bg="#fff" fg="#000">2116.50</Marker>
      <Marker y={331} width={42} bg="#c00000" fg="#000">2112.25</Marker>
      <Marker y={986} width={36} bg="#00ff00" fg="#000">13.500</Marker>
    </g>
  </svg>
);

const TimeScale = () => (
  <svg className="h-5 w-full flex-1 text-[11px]" role="img" aria-label="Time scale">
    <g transform="translate(-3 0)" fill="#fff" textAnchor="middle">
      {TIMES.map(([x, t]) => (
        <g key={x}>
          <rect x={x} width="1" height="4" />
          {t.startsWith("6-") && <rect x={x - 9} y="5" width="19" height="14" />}
          <text x={x} y="16" fill={t.startsWith("6-") ? "#000" : "#fff"}>
            {t}
          </text>
        </g>
      ))}
    </g>
  </svg>
);

/* ---------- window ---------- */

const Globe = () => (
  <svg viewBox="0 0 16 16" className="h-4 w-4" aria-hidden="true">
    <circle cx="8" cy="8" r="7.5" fill="#0a1cff" stroke="#000" />
    <path d="M2 4l3-3 3 1 0 2-1 2-2 0-2 2-1-1z M9 2l3 0 3 4-1 4-2-1 0-3-2 0z M5 8l3 1 2 2-1 2-2 2-2-3z" fill="#0f0" />
  </svg>
);

const MENU = ["Edit", "Chart", "Analysis", "Tools", "Trade", "Window", "CB", "Help"];

const TitleBar = () => (
  <header className="flex h-[23px] items-start justify-between overflow-hidden bg-[linear-gradient(90deg,#c3a9c6_0%,#cdb0cb_8%,#c9abca_17%,#9c7fb0_22%,#a58a98_24%,#8a70b0_27%,#9a80a0_29%,#9474b8_32%,#9a5c9c_34%,#8a70b6_36%,#9068ac_39%,#9878b4_42%,#9064a0_45%,#8272b4_48%,#9c6aa4_50%,#8273b5_53%,#8878bc_60%,#8878bc_66%,#7060a2_73%,#7566a8_78%,#8878bc_84%,#6f60a2_91%,#7565a8_94%,#a497cc_97%,#b4a8d6_100%)]">
    <div className="flex items-center gap-1 pt-1 pl-0.5 text-[12px] leading-4 whitespace-pre text-black">
      <Globe />
      <h1>{"SC ESM15 [CB]  2500 Volume  #1  L:1  E-Mini S&P 500 - GBLX"}</h1>
    </div>
    <div className="mr-px flex h-[18px] overflow-hidden rounded-b-md border border-t-0 border-[#40345c]">
      <button aria-label="Minimize" className="flex w-7 items-center justify-center border-r border-[#5a4c7c] bg-linear-to-b from-[#bdb2d8] to-[#7e70a6]">
        <span className="mt-1 h-[5px] w-3 rounded-[1px] border border-[#444] bg-white" />
      </button>
      <button aria-label="Restore" className="flex w-[27px] items-center justify-center border-r border-[#5a4c7c] bg-linear-to-b from-[#bdb2d8] to-[#7e70a6]">
        <svg viewBox="0 0 12 12" className="h-3 w-3" fill="#fff" stroke="#444" aria-hidden="true">
          <path d="M3.5 .5h8v8h-8z" />
          <path d="M.5 2.500h8v8h-8z" />
          <path d="M3.500 5.500h2v2h-2z" fill="#444" />
        </svg>
      </button>
      <button aria-label="Close" className="flex w-[47px] items-center justify-center bg-linear-to-b from-[#dc9a90] via-[#c03c28] to-[#d06040]">
        <svg viewBox="0 0 12 12" className="h-3 w-3" fill="#fff" stroke="#444" aria-hidden="true">
          <path d="M.5 1.500h3.500l2 2.500 2-2.500h3.500l-3.500 4.500 3.500 4.500h-3.500l-2-2.500-2 2.500h-3.500l3.500-4.500z" />
        </svg>
      </button>
    </div>
  </header>
);

const Title = ({ children }: { children: React.ReactNode }) => (
  <div className="relative flex h-4 gap-2 pl-[5px] leading-4 whitespace-pre">{children}</div>
);

export default function App() {
  return (
    <div className="flex h-screen flex-col overflow-hidden bg-[#b4a8d0] font-['Open_Sans','Noto_Sans',sans-serif] text-[11px] text-white">
      <TitleBar />
      <div className="mr-px mb-px ml-px flex min-h-0 flex-1 flex-col border border-[#40345c]">
        <nav className="h-[18px] shrink-0 bg-linear-to-b from-[#f4f6fb] from-20% via-[#d2daec] via-30% to-[#e2e8f6]">
          <ul className="flex gap-3 pl-[5px] text-[12px] leading-4 text-black">
            {MENU.map((m) => (
              <li key={m}>
                <button>{m}</button>
              </li>
            ))}
          </ul>
        </nav>
        <div className="h-0.5 shrink-0 border-b border-[#808080] bg-[#c0c4d0]" />
        <main className="flex min-h-0 flex-1 flex-col border-l border-white bg-black">
          <div className="flex min-h-0 flex-1">
            <div className="relative flex min-w-0 flex-1 flex-col overflow-hidden border-b-2 border-white">
              <Plot />
              <section className="relative h-[622px] shrink-0 whitespace-pre">
                <div className="flex h-[15px] leading-[15px]">
                  <span className="ml-0.5 w-[101px] shrink-0 bg-[#808080] pl-1">Trade: 2@2123.25</span>
                  <span className="w-[158px] shrink-0 pl-0.5">{"ESM15 [CB]  2500 Volume  #1"}</span>
                  <span className="w-[55px] shrink-0 bg-white pl-px text-black">C=2116.50</span>
                  <span className="w-[39px] shrink-0 pl-1">T=186</span>
                  <span className="w-[51px] shrink-0 bg-[#00c000] pl-px text-black">Chg=0.50</span>
                  <span className="ml-[3px] w-[59px] shrink-0 bg-[#00c000] pl-px text-black">DChg=0.50</span>
                  <span className="w-[686px] shrink-0 pl-1">
                    2015-06-03 21:14:59 H=2116.50 L=2116.00 O=2116.00 V=2123 B=2116.50 A=2116.50 167x396 RV:377 BV=550 AV=1573 DV=1304781
                  </span>
                  <span className="w-[47px] shrink-0">Zig Zag</span>
                  <span className="w-[93px] shrink-0 text-[#ff00ff]">Zig Zag: 2116.50</span>
                  <span>(High, Low, 3, 1.5, 1.25, 5, Total Volume, Yes, No, No, No, No, Points, Yes, No, No, No, No, Yes, Yes, Percent</span>
                </div>
                <span className="ml-0.5 block w-[57px] bg-[#808080] pl-px leading-[15px]">DPL: 0.00P</span>
              </section>
              <section className="h-[149px] shrink-0">
                <Title>
                  <span>DeltaMomentum</span>
                  <span className="text-[#a0a0a0]">Delta Momentum: 4817.000</span>
                  <span className="pl-1">()</span>
                  <span>Cumulative Delta Bars - Volume</span>
                  <span className="text-[#00ff00]">Open: 4693</span>
                  <span className="text-[#008000]">High: 5609</span>
                  <span className="text-[#ff0000]">Low: 4693</span>
                  <span className="text-[#800000]">Close: 5609</span>
                  <span className="pl-1">(Yes)</span>
                </Title>
              </section>
              <section className="h-[158px] shrink-0">
                <Title>
                  <span>newZZb2</span>
                  <span className="text-[#d4ed1c]">Histogram: 4.75</span>
                  <span className="pl-1">(None, Tick Offset, No, High, Low, 3, 1.5, 1.25, 5, No, No, 1, No, No, Points, No, No, No, No, Yes, No, Yes)</span>
                </Title>
              </section>
              <section>
                <Title>
                  <span>Study Subgraphs Difference</span>
                  <span className="text-[#00ff00]">Diff: 13.500</span>
                  <span className="pl-1">(ID12.SG2, ID12.SG3, 0, No)</span>
                </Title>
              </section>
              <Arrows />
            </div>
            <Scale />
          </div>
          <div className="flex h-5 shrink-0 items-center">
            <TimeScale />
            <span className="w-[22px] bg-[#00c000] text-center leading-[15px]">1 L</span>
          </div>
        </main>
        <div className="flex h-[17px] shrink-0 items-center justify-between bg-[#ececec] px-1">
          <button aria-label="Scroll left" className="border-y-4 border-r-4 border-y-transparent border-r-[#404040]" />
          <div className="flex items-center gap-2">
            <button aria-label="Scroll position" className="h-[15px] w-[15px] rounded-[2px] border border-[#909090] bg-linear-to-b from-[#f6f6f6] to-[#cfcfcf]" />
            <button aria-label="Scroll right" className="border-y-4 border-l-4 border-y-transparent border-l-[#404040]" />
          </div>
        </div>
      </div>
    </div>
  );
}
